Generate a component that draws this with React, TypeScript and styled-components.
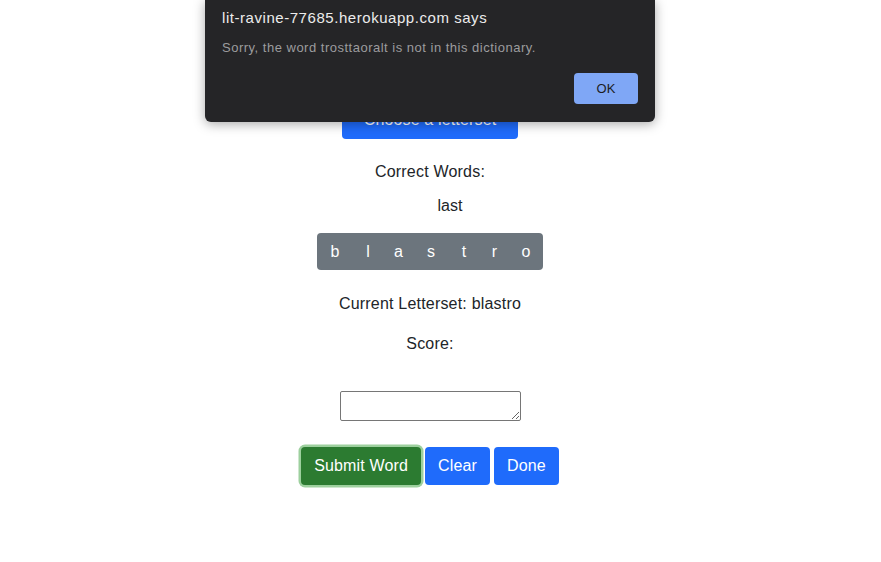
import React from "react";
import styled, { createGlobalStyle } from "styled-components";

const GlobalStyle = createGlobalStyle`
  html, body { margin: 0; padding: 0; background: #fff; }
  body {
    font-family: "Liberation Sans", Arial, Helvetica, sans-serif;
    font-size: 16px;
    line-height: 24px;
    color: #212529;
  }
`;

const Page = styled.div`
  position: relative;
  width: 881px;
  height: 562px;
  overflow: hidden;
`;

const Main = styled.main`
  display: flex;
  flex-direction: column;
  align-items: center;
  padding-top: 101px;
  padding-right: 21px;
`;

const Btn = styled.button<{ $variant: "primary" | "success" | "secondary"; $focus?: boolean }>`
  font-family: inherit;
  font-size: 16px;
  line-height: 24px;
  height: 38px;
  padding: 0 13px;
  border: none;
  border-radius: 4px;
  color: #fff;
  cursor: pointer;
  letter-spacing: 0.15px;
  background: ${(p) =>
    p.$variant === "primary" ? "#1f6bfb" : p.$variant === "success" ? "#2c7b31" : "#6c757d"};
  box-shadow: ${(p) => (p.$focus ? "0 0 0 2.5px #9dd09e" : "none")};
`;

const ChooseButton = styled(Btn)`
  width: 176px;
`;

const Label = styled.div<{ $mt: number }>`
  margin-top: ${(p) => p.$mt}px;
  text-align: center;
  letter-spacing: 0.2px;
`;

const WordList = styled.ul`
  margin: 10px 0 0;
  padding-left: 40px;
  list-style: none;
  text-align: center;
`;

const LetterGroup = styled.div`
  margin-top: 15px;
  display: flex;
  width: 226px;
  height: 37px;
  border-radius: 4px;
  overflow: hidden;
  background: #6c757d;
`;

const Letter = styled.button<{ $w: number }>`
  flex: 0 0 ${(p) => p.$w}px;
  border: none;
  background: transparent;
  color: #fff;
  font-family: inherit;
  font-size: 16px;
  padding: 0;
`;

const Answer = styled.textarea`
  margin-top: 35px;
  width: 181px;
  height: 30px;
  box-sizing: border-box;
  border: 1px solid #767676;
  border-radius: 2px;
  resize: both;
  font-family: inherit;
`;

const Actions = styled.div`
  margin-top: 26px;
  display: flex;
  gap: 4px;
`;

const Dialog = styled.div`
  position: absolute;
  left: 205px;
  top: 0;
  width: 450px;
  height: 122px;
  box-sizing: border-box;
  background: #252527;
  border-radius: 0 0 6px 6px;
  box-shadow: 0 2px 12px rgba(0, 0, 0, 0.35);
  padding: 9px 17px 0;
  display: flex;
  flex-direction: column;
`;

const DialogTitle = styled.div`
  font-size: 15px;
  line-height: 18px;
  letter-spacing: 0.55px;
  color: #ececec;
`;

const DialogMessage = styled.div`
  margin-top: 13px;
  font-size: 13px;
  line-height: 16px;
  letter-spacing: 0.5px;
  color: #9c9c9e;
`;

const DialogFooter = styled.div`
  margin-top: 17px;
  display: flex;
  justify-content: flex-end;
`;

const OkButton = styled.button`
  width: 64px;
  height: 31px;
  border: none;
  border-radius: 4px;
  background: #7fa7f6;
  color: #1d1d1f;
  font-family: inherit;
  font-size: 13px;
`;

const letters: { ch: string; w: number }[] = [
  { ch: "b", w: 36 },
  { ch: "l", w: 30 },
  { ch: "a", w: 31 },
  { ch: "s", w: 34 },
  { ch: "t", w: 32 },
  { ch: "r", w: 29 },
  { ch: "o", w: 34 },
];

export default function App() {
  return (
    <Page>
      <GlobalStyle />
      <Main>
        <ChooseButton $variant="primary">Choose a letterset</ChooseButton>
        <Label $mt={21}>Correct Words:</Label>
        <WordList>
          <li>last</li>
        </WordList>
        <LetterGroup>
          {letters.map((l, i) => (
            <Letter key={i} $w={l.w}>
              {l.ch}
            </Letter>
          ))}
        </LetterGroup>
        <Label $mt={22}>Current Letterset: blastro</Label>
        <Label $mt={16}>Score:</Label>
        <Answer />
        <Actions>
          <Btn $variant="success" $focus>Submit Word</Btn>
          <Btn $variant="primary">Clear</Btn>
          <Btn $variant="primary">Done</Btn>
        </Actions>
      </Main>
      <Dialog>
        <DialogTitle>lit-ravine-77685.herokuapp.com says</DialogTitle>
        <DialogMessage>Sorry, the word trosttaoralt is not in this dictionary.</DialogMessage>
        <DialogFooter>
          <OkButton>OK</OkButton>
        </DialogFooter>
      </Dialog>
    </Page>
  );
}
